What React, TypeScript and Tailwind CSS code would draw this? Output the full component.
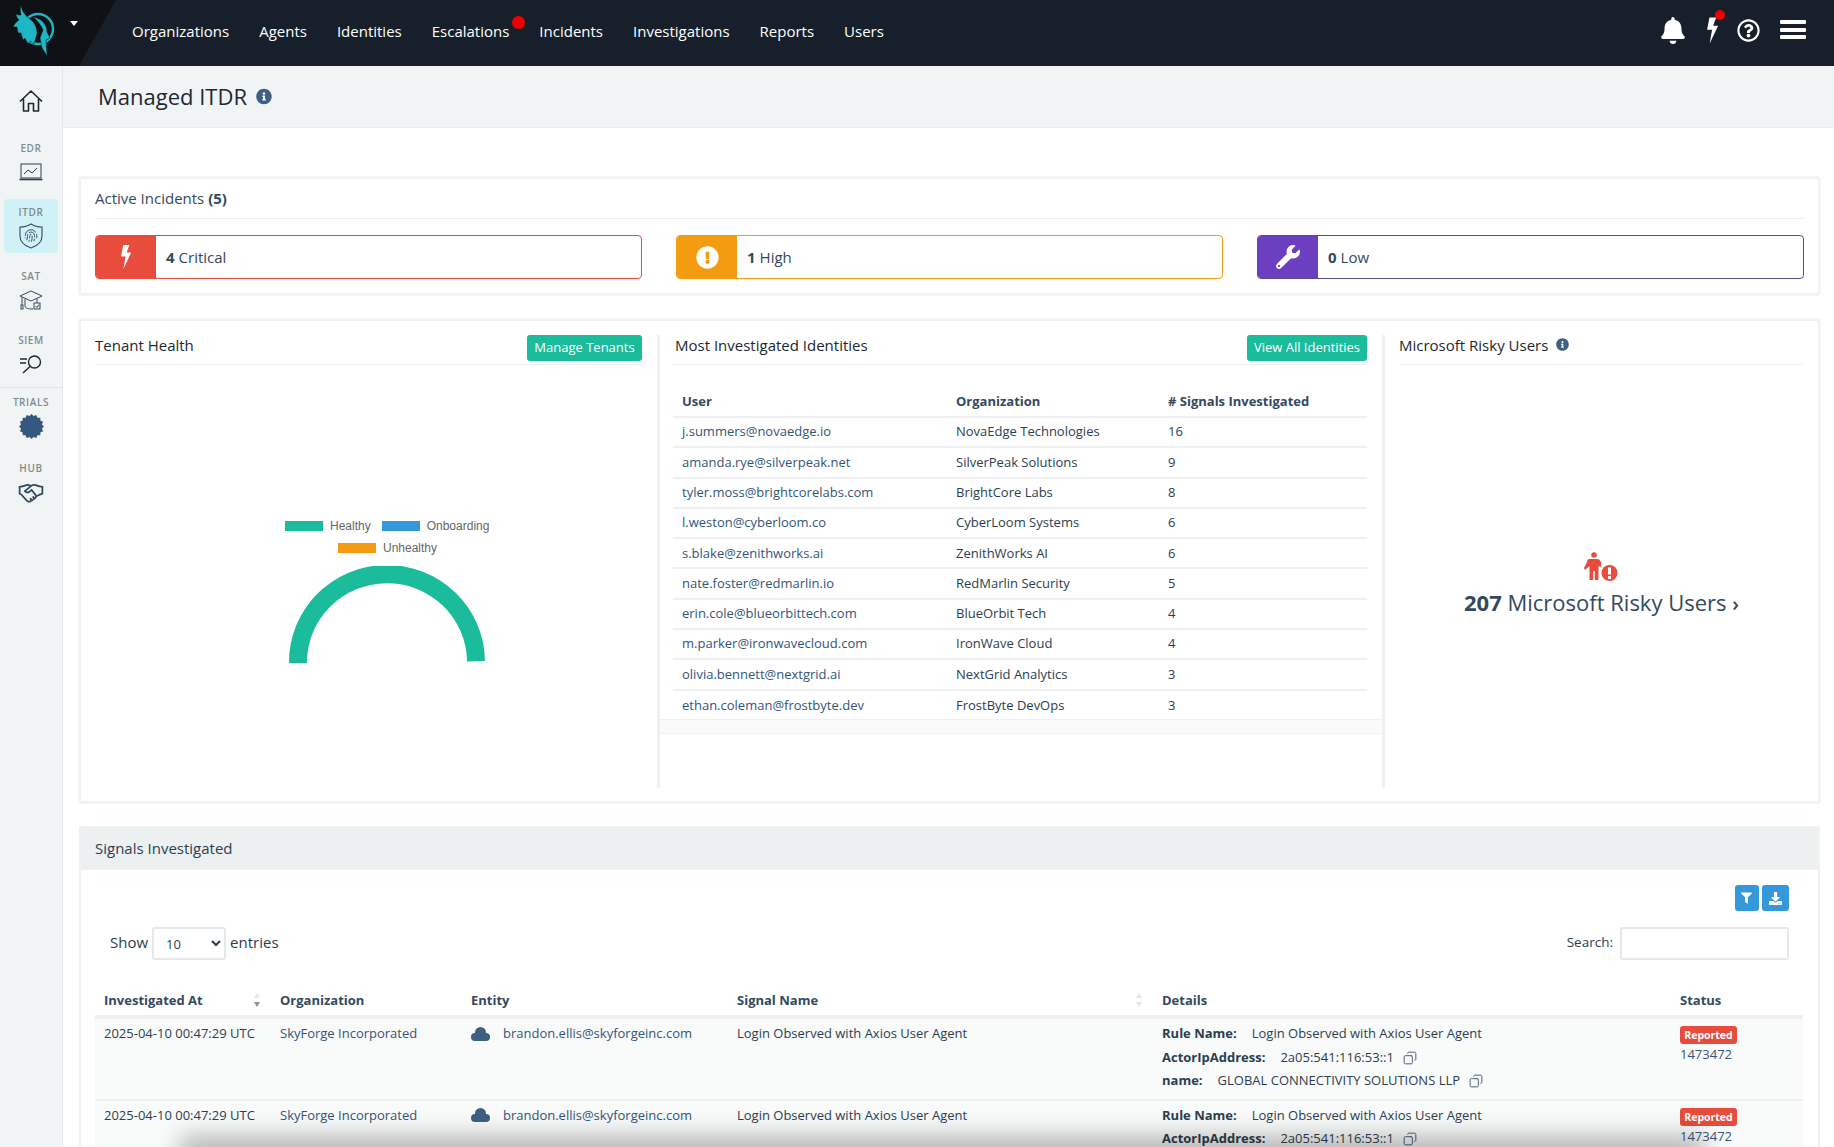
import React from 'react';
import { FaBell, FaDownload, FaExclamationCircle, FaFilter, FaInfoCircle, FaRegQuestionCircle, FaWrench } from 'react-icons/fa';
import { LiaHandshake } from 'react-icons/lia';
import { LuCopy, LuFingerprint } from 'react-icons/lu';

const navItems = ['Organizations', 'Agents', 'Identities', 'Escalations', 'Incidents', 'Investigations', 'Reports', 'Users'];

const identities = [
  ['j.summers@novaedge.io', 'NovaEdge Technologies', '16'],
  ['amanda.rye@silverpeak.net', 'SilverPeak Solutions', '9'],
  ['tyler.moss@brightcorelabs.com', 'BrightCore Labs', '8'],
  ['l.weston@cyberloom.co', 'CyberLoom Systems', '6'],
  ['s.blake@zenithworks.ai', 'ZenithWorks AI', '6'],
  ['nate.foster@redmarlin.io', 'RedMarlin Security', '5'],
  ['erin.cole@blueorbittech.com', 'BlueOrbit Tech', '4'],
  ['m.parker@ironwavecloud.com', 'IronWave Cloud', '4'],
  ['olivia.bennett@nextgrid.ai', 'NextGrid Analytics', '3'],
  ['ethan.coleman@frostbyte.dev', 'FrostByte DevOps', '3'],
];

const Bolt = ({ className }: { className?: string }) => (
  <svg viewBox="0 0 12 24" className={className} fill="currentColor">
    <path d="M3.2 0H9.4L6.6 7.6H11.2L3.4 24L5.6 11.4H1Z" />
  </svg>
);

const Logo = () => (
  <svg viewBox="0 0 66 66" className="absolute left-0 top-0 w-[66px] h-[66px]" fill="#1fb6c6">
    <circle cx="38" cy="29" r="15" fill="none" stroke="#1fb6c6" strokeWidth="2.4" />
    <path d="M21 5C22 12 26 16 31 20C35 23 37 28 37 34L34 44L30 41L28 44L25 38L23 40L21 33L18 33L17 27L13 27C15 23 17 21 19 20C17 18 16 16 16 14C18 15 19 15 21 15C20 11 20 8 21 5Z" stroke="#0e1115" strokeWidth="0.5" />
    <path d="M33 17C41 18 47 24 47 32L50 38L46 40L47 56L42 48L40 38L43 30C41 25 37 20 33 17Z" stroke="#0e1115" strokeWidth="0.5" />
  </svg>
);

const HomeIcon = () => (
  <svg viewBox="0 0 24 22" className="w-[24px] h-[22px]" fill="none" stroke="#1c2833" strokeWidth="1.6" strokeLinejoin="round">
    <path d="M1 11.5L12 1L23 11.5M4.5 9V21H9.5V13.5H14.5V21H19.5V9" />
  </svg>
);

const ChartIcon = () => (
  <svg viewBox="0 0 24 18" className="w-[24px] h-[18px]" fill="none" stroke="#2c3e50" strokeWidth="1">
    <rect x="2" y="1" width="20" height="14" />
    <path d="M0.5 16.5H23.5" strokeWidth="1.6" />
    <path d="M5 11L9 7L13 10L18 5" />
  </svg>
);

const ShieldIcon = () => (
  <div className="relative w-[24px] h-[26px]">
    <svg viewBox="0 0 24 26" className="absolute inset-0 w-[24px] h-[26px]" fill="none" stroke="#34495e" strokeWidth="1.1">
      <path d="M12 1C15 3 19 4 23 4V13C23 19 18 23 12 25C6 23 1 19 1 13V4C5 4 9 3 12 1Z" />
    </svg>
    <LuFingerprint className="absolute left-[5px] top-[5px] w-[14px] h-[15px] text-[#34495e]" strokeWidth={1.6} />
  </div>
);

const CapIcon = () => (
  <svg viewBox="0 0 24 22" className="w-[24px] h-[22px]" fill="none" stroke="#34495e" strokeWidth="1">
    <path d="M12 2L23 7L12 12L1 7Z" />
    <path d="M6 10V17C6 19 9 20 14 20M18 10V14M3 8V16" />
    <rect x="2" y="16" width="2" height="4" />
    <rect x="15" y="14" width="6" height="6" />
    <path d="M16.5 17L18 18.5L20 15.5" />
  </svg>
);

const SearchListIcon = () => (
  <svg viewBox="0 0 24 20" className="w-[24px] h-[20px]" fill="none" stroke="#1c2833" strokeWidth="1.4">
    <circle cx="15.5" cy="8" r="6" />
    <path d="M11 12.5L4 19M1 5H8M1 9H7" />
  </svg>
);

const CloudIcon = () => (
  <svg viewBox="0 0 19 14" className="inline-block w-[19px] h-[14px] mr-[13px] -mt-[2px]" fill="#3e5f82">
    <circle cx="4" cy="10" r="4" />
    <circle cx="15" cy="10" r="4" />
    <circle cx="9.5" cy="5.5" r="5.5" />
    <rect x="4" y="8" width="11" height="6" />
  </svg>
);

const gearPoints = Array.from({ length: 32 }, (_, i) => {
  const r = i % 2 === 0 ? 12 : 10.2;
  const a = (i / 32) * Math.PI * 2;
  return `${(12 + r * Math.cos(a)).toFixed(2)},${(12 + r * Math.sin(a)).toFixed(2)}`;
}).join(' ');

const BadgeIcon = () => (
  <svg viewBox="0 0 24 24" className="w-[25px] h-[25px]" fill="#34587f">
    <polygon points={gearPoints} />
  </svg>
);

const sideItems = [
  { label: 'EDR', icon: <ChartIcon />, cls: 'mt-0' },
  { label: 'ITDR', icon: <ShieldIcon />, cls: 'mt-[10px] bg-[#d0f1f5]' },
  { label: 'SAT', icon: <CapIcon />, cls: 'mt-[10px]' },
  { label: 'SIEM', icon: <SearchListIcon />, cls: 'mt-[10px]' },
  { label: 'TRIALS', icon: <BadgeIcon />, cls: 'mt-[8px]' },
  { label: 'HUB', icon: <LiaHandshake className="w-[28px] h-[28px] text-[#34495e]" />, cls: 'mt-[12px]' },
];

const IncidentBox = ({ icon, count, label, bg, border }: { icon: React.ReactNode; count: string; label: string; bg: string; border: string }) => (
  <div className={`flex h-[44px] w-[547px] rounded-[4px] border overflow-hidden bg-white ${border}`}>
    <div className={`w-[60px] flex items-center justify-center text-white ${bg}`}>{icon}</div>
    <div className="pl-[10px] flex items-center text-[15px] text-[#34495e]">
      <b className="font-bold mr-[4px]">{count}</b> {label}
    </div>
  </div>
);

const SortIcon = ({ dark }: { dark?: boolean }) => (
  <svg viewBox="0 0 8 16" className="w-[8px] h-[16px]">
    <path d="M4 1L7 6H1Z" fill="#e6e8ea" />
    <path d="M4 15L7 10H1Z" fill={dark ? '#8a929a' : '#e6e8ea'} />
  </svg>
);

const Copy = () => <LuCopy className="inline-block w-[14px] h-[14px] text-[#4a6078] -scale-x-100 -mt-[1px]" strokeWidth={1.7} />;

const SignalRow = () => (
  <tr className="bg-[#f9fafa] border-b-2 border-[#eef0f1] align-top text-[#2c3e50]">
    <td className="pl-[9px] pt-[3px] leading-[23.5px]">2025-04-10 00:47:29 UTC</td>
    <td className="pl-[9px] pt-[3px] leading-[23.5px] text-[#34557a]">SkyForge Incorporated</td>
    <td className="pl-[9px] pt-[3px] leading-[23.5px]">
      <CloudIcon />
      <span className="text-[#34557a]">brandon.ellis@skyforgeinc.com</span>
    </td>
    <td className="pl-[9px] pt-[3px] leading-[23.5px]">Login Observed with Axios User Agent</td>
    <td className="pl-[9px] pt-[3px] pb-[6px] leading-[23.5px]">
      <div><b className="font-bold mr-[15px]">Rule Name:</b>Login Observed with Axios User Agent</div>
      <div><b className="font-bold mr-[15px]">ActorIpAddress:</b>2a05:541:116:53::1<span className="ml-[9px]"><Copy /></span></div>
      <div><b className="font-bold mr-[15px]">name:</b>GLOBAL CONNECTIVITY SOLUTIONS LLP<span className="ml-[9px]"><Copy /></span></div>
    </td>
    <td className="pl-[9px] pt-[7px]">
      <div className="w-[57px] h-[18px] rounded-[3px] bg-[#e74c3c] text-white text-[10.5px] font-bold leading-[18px] text-center">Reported</div>
      <div className="leading-[21px] text-[#34557a]">1473472</div>
    </td>
  </tr>
);

export default function App() {
  return (
    <div className="relative h-[1147px] w-[1834px] overflow-hidden bg-white text-[13px] text-[#2c3e50] [font-family:Open_Sans,sans-serif]">
      {/* top bar */}
      <header className="relative h-[66px] bg-[#17202a] flex items-center">
        <div className="absolute left-0 top-0 h-[66px] w-[116px] bg-[#0e1115] [clip-path:polygon(0_0,100%_0,68%_100%,0_100%)]" />
        <Logo />
        <div className="absolute left-[70px] top-[21px] w-0 h-0 border-x-[4px] border-x-transparent border-t-[5px] border-t-white" />
        <nav className="relative ml-[132px] -mt-[4px] flex gap-[30px] text-[15px] text-white">
          {navItems.map(item => (
            <a key={item} className="relative">
              {item}
              {item === 'Escalations' && <span className="absolute -right-[16px] -top-[4px] w-[13px] h-[13px] rounded-full bg-[#f00000]" />}
            </a>
          ))}
        </nav>
        <FaBell className="absolute left-[1661px] top-[17px] w-[24px] h-[27px] text-white" />
        <Bolt className="absolute left-[1706px] top-[17px] w-[13px] h-[27px] text-white" />
        <span className="absolute left-[1715px] top-[10px] w-[10px] h-[10px] rounded-full bg-[#f00000]" />
        <FaRegQuestionCircle className="absolute left-[1737px] top-[19px] w-[23px] h-[23px] text-white" />
        <div className="absolute left-[1780px] top-[20px] w-[26px] flex flex-col gap-[3.5px]">
          <span className="h-[4px] rounded-[1px] bg-white" />
          <span className="h-[4px] rounded-[1px] bg-white" />
          <span className="h-[4px] rounded-[1px] bg-white" />
        </div>
      </header>

      {/* sidebar */}
      <aside className="absolute left-0 top-[66px] bottom-0 w-[63px] bg-[#f1f4f5] border-r border-[#e4e8ea]">
        <div className="h-[69px] flex items-center justify-center pr-[1px]"><HomeIcon /></div>
        {sideItems.map(item => (
          <div key={item.label} className={`mx-[4px] w-[54px] h-[54px] rounded-[4px] flex flex-col items-center ${item.cls}`}>
            <span className="mt-[7px] h-[13px] leading-[13px] text-[10px] font-semibold tracking-[0.6px] text-[#7f8c8d]">{item.label}</span>
            <div className="h-[26px] mt-[4px] flex items-center justify-center">{item.icon}</div>
          </div>
        ))}
        <div className="absolute left-0 right-0 top-[321px] h-px bg-[#dfe3e6]" />
      </aside>

      <main className="absolute left-[63px] top-[66px] right-0">
        <div className="h-[62px] bg-[#f1f4f5] border-b border-[#e9edee] pl-[35px] flex items-center">
          <h1 className="text-[22px] text-[#1c2833]">Managed ITDR</h1>
          <FaInfoCircle className="ml-[9px] w-[16px] h-[17px] text-[#3e5f82]" />
        </div>

        {/* active incidents */}
        <section className="ml-[16px] mt-[49px] w-[1741px] h-[118px] border-2 border-[#f0f1f2] rounded-[2px] px-[14px] shadow-[0_0_0_1px_#f5f6f7]">
          <div className="h-[40px] border-b border-[#eef0f1] flex items-center text-[15px] text-[#34495e]">
            <span>Active Incidents <b className="font-bold">(5)</b></span>
          </div>
          <div className="mt-[16px] flex justify-between">
            <IncidentBox icon={<Bolt className="w-[12px] h-[24px]" />} count="4" label="Critical" bg="bg-[#e74c3c]" border="border-[#e74c3c]" />
            <IncidentBox icon={<FaExclamationCircle className="w-[23px] h-[23px]" />} count="1" label="High" bg="bg-[#f39c12]" border="border-[#f39c12]" />
            <IncidentBox icon={<FaWrench className="w-[24px] h-[24px]" />} count="0" label="Low" bg="bg-[#6b3fc0]" border="border-[#5d4a8f]" />
          </div>
        </section>

        {/* overview */}
        <section className="ml-[16px] mt-[24px] w-[1741px] h-[484px] border-2 border-[#f0f1f2] rounded-[2px] relative shadow-[0_0_0_1px_#f5f6f7]">
          <div className="absolute left-[14px] top-[14px] w-[547px] h-[30px] border-b border-[#eef0f1] flex justify-between items-start">
            <h2 className="text-[15px] leading-[24px] -mt-[2px] text-[#1c2833]">Tenant Health</h2>
            <a className="h-[26px] w-[115px] rounded-[3px] bg-[#1abc9c] text-white text-[13px] font-medium leading-[25px] text-center">Manage Tenants</a>
          </div>
          <div className="absolute left-[204px] top-[198px] w-[212px] text-[12px] text-[#666] [font-family:Liberation_Sans,sans-serif]">
            <div className="flex items-center h-[14px]">
              <span className="w-[38px] h-[10px] bg-[#1abc9c]" />
              <span className="ml-[7px]">Healthy</span>
              <span className="ml-[11px] w-[38px] h-[10px] bg-[#3498db]" />
              <span className="ml-[7px]">Onboarding</span>
            </div>
            <div className="flex items-center h-[14px] mt-[8px] ml-[53px]">
              <span className="w-[38px] h-[10px] bg-[#f39c12]" />
              <span className="ml-[7px]">Unhealthy</span>
            </div>
          </div>
          <svg viewBox="0 0 200 100" className="absolute left-[206px] top-[245px] w-[200px] h-[100px]">
            <path d="M2 97A98 97 0 0 1 198 95L180 95.5A80 79 0 0 0 20 97Z" fill="#1abc9c" />
          </svg>

          <div className="absolute left-[576px] top-[14px] w-[3px] h-[453px] bg-[#eef0f1]" />
          <div className="absolute left-[1301px] top-[14px] w-[3px] h-[453px] bg-[#eef0f1]" />

          <div className="absolute left-[592px] top-[14px] w-[694px] h-[30px] border-b border-[#eef0f1] flex justify-between items-start">
            <h2 className="text-[15px] leading-[24px] -mt-[2px] ml-[2px] text-[#1c2833]">Most Investigated Identities</h2>
            <a className="h-[26px] w-[120px] rounded-[3px] bg-[#1abc9c] text-white text-[13px] font-medium leading-[25px] text-center">View All Identities</a>
          </div>
          <table className="absolute left-[592px] top-[66px] w-[694px] table-fixed border-collapse text-[13px]">
            <thead>
              <tr className="h-[30px] border-b-2 border-[#eef0f1] text-left text-[#34495e]">
                <th className="w-[274px] pl-[9px] font-bold">User</th>
                <th className="w-[212px] pl-[9px] font-bold">Organization</th>
                <th className="pl-[9px] font-bold"># Signals Investigated</th>
              </tr>
            </thead>
            <tbody>
              {identities.map((row, i) => (
                <tr key={row[0]} className={`h-[30.3px] text-[#2c3e50] ${i < 9 ? 'border-b-2 border-[#eef0f1]' : ''}`}>
                  <td className="pl-[9px] text-[#34557a]">{row[0]}</td>
                  <td className="pl-[9px]">{row[1]}</td>
                  <td className="pl-[9px]">{row[2]}</td>
                </tr>
              ))}
            </tbody>
          </table>
          <div className="absolute left-[579px] top-[398px] w-[722px] h-[15px] bg-[#fafafa] border-y border-[#eef0f1]" />

          <div className="absolute left-[1319px] top-[14px] w-[403px] h-[30px] border-b border-[#eef0f1] flex items-start">
            <h2 className="text-[15px] leading-[24px] -mt-[2px] -ml-[1px] text-[#1c2833]">Microsoft Risky Users</h2>
            <FaInfoCircle className="ml-[8px] mt-[3px] w-[13px] h-[13px] text-[#3e5f82]" />
          </div>
          <svg viewBox="0 0 34 30" className="absolute left-[1503px] top-[231px] w-[34px] h-[30px]" fill="#e74c3c">
            <circle cx="10" cy="3" r="2.8" />
            <path d="M5 7H13C15 7 16 8 17 10V15L14.5 14V28H10.8V19H9.2V28H5.5V14L1 18L0 16L3 10C3.5 8 4 7 5 7Z" />
            <circle cx="25.5" cy="21" r="8" />
            <rect x="24" y="15.5" width="3" height="7" fill="#fff" />
            <rect x="24" y="24" width="3" height="3" fill="#fff" />
          </svg>
          <div className="absolute left-[1383px] top-[263px] whitespace-nowrap text-[22px] leading-[36px] text-[#34495e]">
            <b className="font-bold">207</b> Microsoft Risky Users <span className="text-[20px] font-semibold">›</span>
          </div>
        </section>

        {/* signals */}
        <section className="ml-[16px] mt-[23px] w-[1741px] h-[400px] border-x-2 border-[#f0f1f2] relative">
          <div className="h-[44px] bg-[#ecf0f1] pl-[14px] flex items-center text-[15px] text-[#2c3e50]">Signals Investigated</div>
          <div className="flex justify-end gap-[3.5px] pt-[15px] pr-[29px]">
            <a className="w-[24px] h-[26px] rounded-[3px] bg-[#3498db] text-white flex items-center justify-center"><FaFilter className="w-[11px] h-[12px]" /></a>
            <a className="w-[27px] h-[26px] rounded-[3px] bg-[#3498db] text-white flex items-center justify-center"><FaDownload className="w-[13px] h-[13px]" /></a>
          </div>
          <div className="mt-[16px] h-[33px] flex items-center justify-between pl-[29px] pr-[29px]">
            <div className="flex items-center text-[15px]">
              <span className="-mt-[2px]">Show</span>
              <select defaultValue="10" className="mx-[4px] w-[74px] h-[33px] rounded-[3px] border-2 border-[#e5e9ec] bg-white pl-[8px] text-[13px]">
                <option value="10">10</option>
              </select>
              <span className="-mt-[2px]">entries</span>
            </div>
            <div className="flex items-center text-[13.5px]">
              <span className="-mt-[2px]">Search:</span>
              <input className="ml-[7px] w-[169px] h-[33px] rounded-[2px] border-2 border-[#e5e9ec] bg-white" />
            </div>
          </div>
          <table className="absolute left-[14px] top-[159px] w-[1708px] table-fixed border-collapse text-[13px]">
            <thead>
              <tr className="h-[32px] border-b-4 border-[#eef0f1] text-left text-[#34495e]">
                <th className="w-[176px] pl-[9px] pt-[2px] font-bold relative">Investigated At<span className="absolute right-[10px] top-[7px]"><SortIcon dark /></span></th>
                <th className="w-[191px] pl-[9px] pt-[2px] font-bold">Organization</th>
                <th className="w-[266px] pl-[9px] pt-[2px] font-bold">Entity</th>
                <th className="w-[425px] pl-[9px] pt-[2px] font-bold relative">Signal Name<span className="absolute right-[10px] top-[7px]"><SortIcon /></span></th>
                <th className="w-[518px] pl-[9px] pt-[2px] font-bold">Details</th>
                <th className="pl-[9px] pt-[2px] font-bold">Status</th>
              </tr>
            </thead>
            <tbody>
              <SignalRow />
              <SignalRow />
            </tbody>
          </table>
        </section>
      </main>

      <div className="absolute left-[180px] right-[130px] -bottom-[16px] h-[26px] bg-black/30 blur-[12px]" />
    </div>
  );
}
